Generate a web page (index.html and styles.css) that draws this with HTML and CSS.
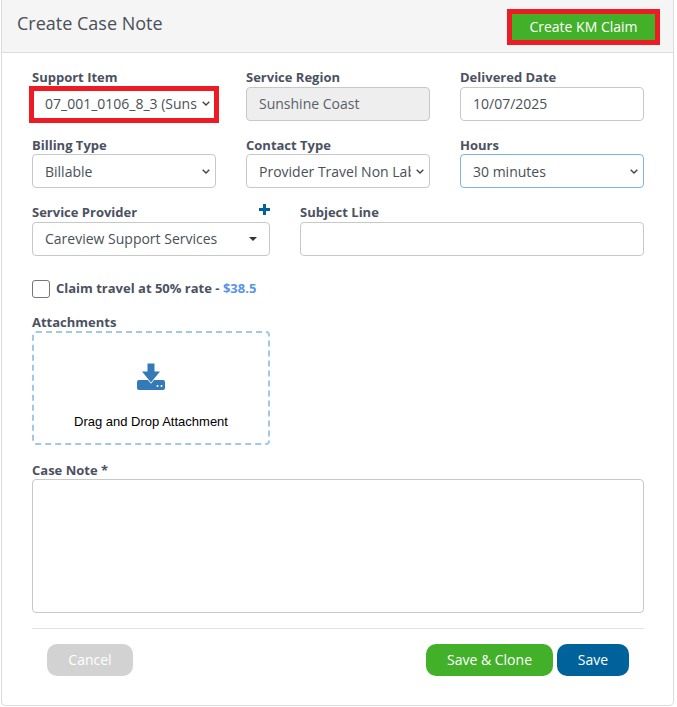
FILE: index.html
```html
<!DOCTYPE html>
<html lang="en">
<head>
<meta charset="utf-8">
<title>Create Case Note</title>
<link rel="stylesheet" href="styles.css">
</head>
<body>
<div class="card">
  <header class="card-head">
    <h1 class="title">Create Case Note</h1>
    <button type="button" class="btn btn-km">Create KM Claim</button>
  </header>
  <form class="card-body">
    <div class="row thirds">
      <div class="field">
        <label class="label">Support Item</label>
        <div class="annotated">
          <select class="control select"><option>07_001_0106_8_3 (Sunshine Coast)</option></select>
        </div>
      </div>
      <div class="field">
        <label class="label">Service Region</label>
        <input class="control" type="text" value="Sunshine Coast" disabled>
      </div>
      <div class="field">
        <label class="label">Delivered Date</label>
        <input class="control" type="text" value="10/07/2025">
      </div>
    </div>
    <div class="row thirds">
      <div class="field">
        <label class="label">Billing Type</label>
        <select class="control select"><option>Billable</option></select>
      </div>
      <div class="field">
        <label class="label">Contact Type</label>
        <select class="control select"><option>Provider Travel Non Labour</option></select>
      </div>
      <div class="field">
        <label class="label">Hours</label>
        <select class="control select focused"><option>30 minutes</option></select>
      </div>
    </div>
    <div class="row split">
      <div class="field">
        <div class="label-row">
          <label class="label">Service Provider</label>
          <svg class="plus" width="11" height="11" viewBox="0 0 11 11" aria-hidden="true"><path d="M4 0h3v4h4v3H7v4H4V7H0V4h4z"/></svg>
        </div>
        <div class="control picker"><span>Careview Support Services</span><i class="caret"></i></div>
      </div>
      <div class="field">
        <label class="label">Subject Line</label>
        <input class="control" type="text">
      </div>
    </div>
    <label class="claim">
      <input class="check" type="checkbox">
      <span class="claim-text">Claim travel at 50% rate - <em class="amount">$38.5</em></span>
    </label>
    <div class="attach">
      <label class="label">Attachments</label>
      <div class="drop">
        <svg class="drop-icon" width="28" height="27" viewBox="0 0 28 27" aria-hidden="true">
          <path class="tray" d="M2 17h24a2 2 0 0 1 2 2v6a2 2 0 0 1-2 2H2a2 2 0 0 1-2-2v-6a2 2 0 0 1 2-2z"/>
          <path class="arrow" d="M10.5 0.5h7v8h5.5L14 19.5 5 8.5h5.500z"/>
          <circle class="dot" cx="20.500" cy="23" r="1"/>
          <circle class="dot" cx="24.500" cy="23" r="1"/>
        </svg>
        <span class="drop-text">Drag and Drop Attachment</span>
      </div>
    </div>
    <div class="note">
      <label class="label">Case Note *</label>
      <textarea class="control area"></textarea>
    </div>
    <div class="actions">
      <button type="button" class="btn btn-cancel">Cancel</button>
      <div class="actions-right">
        <button type="button" class="btn btn-clone">Save &amp; Clone</button>
        <button type="button" class="btn btn-save">Save</button>
      </div>
    </div>
  </form>
</div>
</body>
</html>
```
FILE: styles.css
```css
* { box-sizing: border-box; }
html, body { margin: 0; padding: 0; background: #fff; }
body { font-family: "Open Sans", sans-serif; font-size: 14px; color: #495057; }

.card {
  width: 673px;
  height: 706px;
  margin-left: 1px;
  border: 1px solid #dcdcdc;
  border-top: 0;
  border-radius: 0 0 5px 5px;
}
.card-head {
  height: 53px;
  background: #f5f5f5;
  border-bottom: 1px solid #dcdcdc;
  display: flex;
  justify-content: space-between;
  align-items: flex-start;
  padding: 14px 18px 0 15px;
}
.title { margin: 0; font-size: 18px; line-height: 19px; font-weight: 400; color: #4a4f57; }

.btn { border: 0; font-family: inherit; color: #fff; font-size: 14px; cursor: pointer; }
.btn-km {
  width: 143px;
  height: 26px;
  padding: 0 0 2px;
  background: #43b02a;
  outline: 5px solid #ed1c24;
}

.card-body { padding: 15px 29px 0 30px; }
.row { display: flex; gap: 30px; }
.thirds .field { width: 184px; }
.split .field:first-child { width: 238px; }
.split .field:last-child { width: 344px; }
.field { margin-bottom: 14.750px; }

.label { display: block; font-size: 13px; line-height: 18.750px; font-weight: 700; color: #4b5161; }
.label-row { display: flex; justify-content: space-between; align-items: flex-start; }
.plus { fill: #00629b; margin-top: 1px; }

.control {
  display: block;
  width: 100%;
  height: 34px;
  padding: 0 12px;
  border: 1px solid #c8c8c8;
  border-radius: 4px;
  background: #fff;
  font-family: inherit;
  font-size: 14px;
  color: #495057;
}
.control:disabled { background: #eee; color: #5a6068; }
.select {
  appearance: none;
  padding-right: 18px;
  background-image: url("data:image/svg+xml,%3Csvg xmlns='http://www.w3.org/2000/svg' width='8' height='5' viewBox='0 0 8 5'%3E%3Cpath d='M.7.7 4 4 7.300.7' fill='none' stroke='%23444' stroke-width='1.400'/%3E%3C/svg%3E");
  background-repeat: no-repeat;
  background-position: right 5px center;
}
.focused { border-color: #7fb2e0; }

.annotated { position: relative; }
.annotated::after {
  content: "";
  position: absolute;
  inset: -1px -3px -2px -3px;
  border: 5px solid #ed1c24;
  pointer-events: none;
}

.picker { display: flex; align-items: center; justify-content: space-between; padding-right: 12px; }
.caret { width: 0; height: 0; border: 4px solid transparent; border-top-color: #333; border-bottom: 0; }

.claim { display: flex; align-items: flex-start; gap: 6px; height: 18px; margin-top: 9.500px; font-size: 13px; font-weight: 700; color: #4b5161; }
.claim-text { line-height: 16px; }
.check { appearance: none; width: 18px; height: 18px; margin: 0; background: #fff; border: 1px solid #767676; border-radius: 3px; }
.amount { font-style: normal; color: #5b94e6; }

.attach { margin-top: 14.500px; }
.drop {
  width: 238px;
  height: 114px;
  border: 2px dashed #a3c8e6;
  border-radius: 4px;
  display: flex;
  flex-direction: column;
  align-items: center;
  padding-top: 30px;
}
.tray { fill: #337ab7; }
.arrow { fill: #337ab7; stroke: #fff; stroke-width: 1.500px; paint-order: stroke; }
.dot { fill: #fff; }
.drop-text { margin-top: 23px; font-family: "Liberation Sans", Arial, sans-serif; font-size: 13px; line-height: 18px; color: #000; }

.note { margin-top: 15.250px; }
.area { height: 134px; resize: none; }

.actions {
  margin-top: 15px;
  border-top: 1px solid #e2e2e2;
  padding: 15px 15px 0 15px;
  display: flex;
  justify-content: space-between;
}
.actions-right { display: flex; gap: 4px; }
.actions .btn { height: 32px; border-radius: 10px; padding: 0 0 2px; }
.btn-cancel { width: 86px; background: #d2d2d2; }
.btn-clone { width: 127px; background: #43b02a; }
.btn-save { width: 72px; background: #00629b; }
```
